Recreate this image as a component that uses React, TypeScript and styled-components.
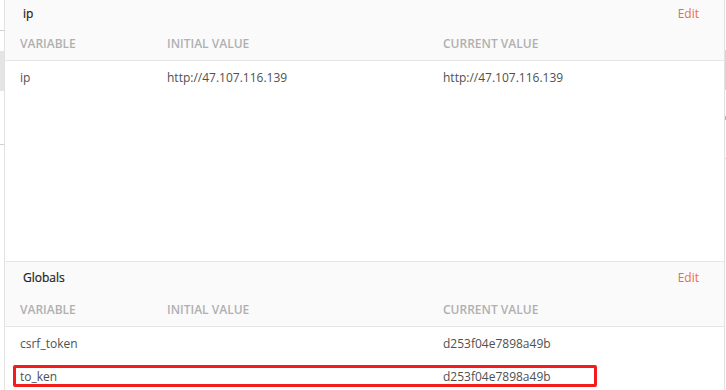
import styled, { createGlobalStyle } from 'styled-components';

const Global = createGlobalStyle`
  html, body { margin: 0; padding: 0; background: #fff; }
  body { font-family: "Open Sans", "Noto Sans", sans-serif; }
`;

const Page = styled.div`
  display: flex;
  width: 726px;
  height: 390px;
  overflow: hidden;
`;

const SideStrip = styled.div<{ $w: number }>`
  width: ${(p) => p.$w}px;
  flex: none;
  display: flex;
  flex-direction: column;
  background: #fff;
`;

const StripMark = styled.div<{ $top: number; $h: number; $c: string }>`
  margin-top: ${(p) => p.$top}px;
  height: ${(p) => p.$h}px;
  background: ${(p) => p.$c};
`;

const Panel = styled.div`
  width: 719px;
  flex: none;
  display: flex;
  flex-direction: column;
  border-left: 1px solid #e2e2e2;
  border-right: 1px solid #e2e2e2;
  background: #fff;
`;

const Section = styled.div<{ $first?: boolean }>`
  display: flex;
  flex-direction: column;
  flex: ${(p) => (p.$first ? '0 0 261px' : '1')};
`;

const Head = styled.div<{ $top: boolean }>`
  background: #fafafa;
  border-top: ${(p) => (p.$top ? 'none' : '1px solid #e6e6e6')};
  border-bottom: 1px solid #e6e6e6;
  display: flex;
  flex-direction: column;
`;

const TitleBar = styled.div<{ $h: number }>`
  display: flex;
  justify-content: space-between;
  align-items: center;
  height: ${(p) => p.$h}px;
  padding: 0 25px 0 18px;
`;

const Title = styled.span`
  font-size: 12px;
  font-weight: 400;
  color: #222;
  -webkit-text-stroke: 0.2px #222;
`;

const Edit = styled.span`
  font-size: 12px;
  color: #f26b3a;
`;

const Cols = styled.div<{ $h: number }>`
  display: grid;
  grid-template-columns: 147px 276px 1fr;
  align-items: center;
  height: ${(p) => p.$h}px;
  padding-left: 15px;
`;

const ColHead = styled.span`
  font-size: 12px;
  font-weight: 600;
  color: #b0b0b0;
`;

const Row = styled.div`
  display: grid;
  grid-template-columns: 147px 276px 1fr;
  align-items: center;
  height: 33px;
  padding-left: 15px;
  position: relative;
`;

const Cell = styled.span`
  font-size: 12px;
  color: #505050;
`;

const Marker = styled.div`
  position: absolute;
  left: 8px;
  top: 5px;
  width: 578px;
  height: 16px;
  border: 3px solid #f21c1c;
  border-radius: 2px;
  pointer-events: none;
`;

type Variable = { name: string; initial: string; current: string; marked?: boolean };

const envVars: Variable[] = [
  { name: 'ip', initial: 'http://47.107.116.139', current: 'http://47.107.116.139' },
];

const globalVars: Variable[] = [
  { name: 'csrf_token', initial: '', current: 'd253f04e7898a49b' },
  { name: 'to_ken', initial: '', current: 'd253f04e7898a49b', marked: true },
];

const VarSection = ({ title, vars, first }: { title: string; vars: Variable[]; first?: boolean }) => (
  <Section $first={first}>
    <Head $top={!!first}>
      <TitleBar $h={first ? 27 : 30}>
        <Title>{title}</Title>
        <Edit>Edit</Edit>
      </TitleBar>
      <Cols $h={first ? 33 : 34}>
        <ColHead>VARIABLE</ColHead>
        <ColHead>INITIAL VALUE</ColHead>
        <ColHead>CURRENT VALUE</ColHead>
      </Cols>
    </Head>
    {vars.map((v) => (
      <Row key={v.name}>
        <Cell>{v.name}</Cell>
        <Cell>{v.initial}</Cell>
        <Cell>{v.current}</Cell>
        {v.marked && <Marker />}
      </Row>
    ))}
  </Section>
);

export default function App() {
  return (
    <Page>
      <Global />
      <SideStrip $w={4}>
        <StripMark $top={30} $h={1} $c="#d0d0d0" />
        <StripMark $top={20} $h={40} $c="#e4e4e4" />
        <StripMark $top={53} $h={1} $c="#d0d0d0" />
      </SideStrip>
      <Panel>
        <VarSection title="ip" vars={envVars} first />
        <VarSection title="Globals" vars={globalVars} />
      </Panel>
      <SideStrip $w={2}>
        <StripMark $top={50} $h={40} $c="#d6d6d6" />
        <StripMark $top={26} $h={4} $c="#f6a07f" />
        <StripMark $top={38} $h={1} $c="#d0d0d0" />
      </SideStrip>
    </Page>
  );
}
